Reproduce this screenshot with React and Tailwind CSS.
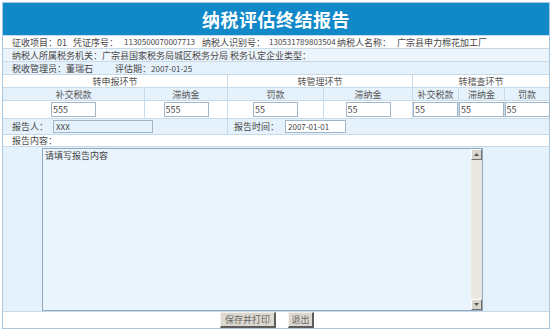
const cols = "grid grid-cols-[141px_83px_96px_89px_46px_46px_45px]";

function Cell({ children, className = "" }) {
  return (
    <div className={`flex items-center justify-center border-l border-[#c6dae9] first:border-l-0 ${className}`}>
      {children}
    </div>
  );
}

function SmallInput({ value, className = "" }) {
  return (
    <input
      readOnly
      value={value}
      className={`h-[15px] w-[45px] border border-[#a3b6c8] bg-white px-[1px] text-[9px] leading-none text-[#444] outline-none ${className}`}
    />
  );
}

function ScrollArrow({ up }) {
  return (
    <div className="flex h-[11px] w-[11px] items-center justify-center border-t border-l border-t-white border-l-white border-r border-b border-r-[#6f6f6f] border-b-[#6f6f6f] bg-[#d9d6ce]">
      <svg width="5" height="3" viewBox="0 0 5 3">
        <path d={up ? "M0 3 L2.5 0 L5 3 Z" : "M0 0 L2.5 3 L5 0 Z"} fill="#555" />
      </svg>
    </div>
  );
}

export default function App() {
  const values = ["555", "555", "55", "55", "55", "55", "55"];
  return (
    <div className="min-h-[331px] w-[553px] bg-white pl-[2px] pt-[2px] font-['Noto_Sans_CJK_SC',sans-serif] text-[9px] text-[#484848]">
      <div className="w-[548px] border border-[#aac8df]">
        <div className="flex h-[32px] items-center justify-center bg-[#1189c9]">
          <h1 className="text-[18px] font-bold tracking-[0.5px] text-white">纳税评估终结报告</h1>
        </div>

        <div className="flex h-[13px] items-center border-t border-[#c6dae9] bg-white pl-[9px] leading-none">
          <span className="w-[61px]">征收项目：01</span>
          <span className="w-[51px]">凭证序号：</span>
          <span className="w-[78px] text-[8px]">1130500070007713</span>
          <span className="w-[67px]">纳税人识别号：</span>
          <span className="w-[68px] text-[8px]">130531789803504</span>
          <span className="w-[60px]">纳税人名称：</span>
          <span>广宗县申力棉花加工厂</span>
        </div>

        <div className="flex h-[13px] items-center border-t border-[#c6dae9] bg-[#edf5fc] pl-[9px] leading-none">
          <span className="w-[90px]">纳税人所属税务机关：</span>
          <span className="w-[128px]">广宗县国家税务局城区税务分局</span>
          <span>税务认定企业类型：</span>
        </div>

        <div className="flex h-[13px] items-center border-t border-[#c6dae9] bg-[#e5f1fb] pl-[9px] leading-none">
          <span className="w-[103px]">税收管理员：董瑞石</span>
          <span>评估期：<span className="text-[8px]">2007-01-25</span></span>
        </div>

        <div className="grid h-[13px] grid-cols-[224px_185px_137px] border-t border-[#c6dae9] bg-white leading-none text-[#555]">
          <Cell>转申报环节</Cell>
          <Cell>转管理环节</Cell>
          <Cell>转稽查环节</Cell>
        </div>

        <div className={`${cols} h-[13px] border-t border-[#c6dae9] bg-[#e5f1fb] leading-none text-[#555]`}>
          <Cell>补交税款</Cell>
          <Cell>滞纳金</Cell>
          <Cell>罚款</Cell>
          <Cell>滞纳金</Cell>
          <Cell>补交税款</Cell>
          <Cell>滞纳金</Cell>
          <Cell>罚款</Cell>
        </div>

        <div className={`${cols} h-[18px] border-t border-[#c6dae9] bg-white`}>
          {values.map((v, i) => (
            <Cell key={i}>
              <SmallInput value={v} className={i > 3 ? "w-[44px]" : ""} />
            </Cell>
          ))}
        </div>

        <div className="grid h-[16px] grid-cols-[224px_322px] border-t border-[#c6dae9] bg-[#e5f1fb] leading-none">
          <div className="flex items-center pl-[9px]">
            <span className="w-[41px]">报告人：</span>
            <input
              readOnly
              value="XXX"
              className="h-[13px] w-[100px] border border-[#a3b6c8] bg-[#e5f1fb] px-[2px] text-[8px] text-[#444] outline-none"
            />
          </div>
          <div className="flex items-center border-l border-[#c6dae9] pl-[6px]">
            <span className="w-[51px]">报告时间：</span>
            <input
              readOnly
              value="2007-01-01"
              className="h-[13px] w-[61px] border border-[#a3b6c8] bg-white px-[2px] text-[8px] text-[#444] outline-none"
            />
          </div>
        </div>

        <div className="flex h-[12px] items-center border-t border-[#c6dae9] bg-white pl-[9px] leading-none">
          报告内容：
        </div>

        <div className="h-[165px] border-t border-[#c6dae9] bg-[#e5f1fb] pl-[39px] pt-[1px]">
          <div className="flex h-[163px] w-[441px] border border-[#93a9bd] bg-[#eaf4fd]">
            <textarea
              readOnly
              defaultValue="请填写报告内容"
              className="flex-1 resize-none bg-transparent px-[2px] py-[1px] text-[9px] leading-[11px] text-[#444] outline-none"
            />
            <div className="flex w-[11px] flex-col justify-between bg-[#ebe8e1]">
              <ScrollArrow up />
              <ScrollArrow />
            </div>
          </div>
        </div>

        <div className="flex h-[17px] items-start justify-center gap-[12px] border-t border-[#c6dae9] bg-white pr-[18px]">
          <button className="h-[16px] w-[56px] border-t border-l border-t-[#f2f0ea] border-l-[#f2f0ea] border-r-2 border-b-2 border-r-[#5d5d5d] border-b-[#5d5d5d] bg-[#dcd8cf] text-[9px] leading-none text-[#666]">
            保存并打印
          </button>
          <button className="h-[16px] w-[26px] border-t border-l border-t-[#f2f0ea] border-l-[#f2f0ea] border-r-2 border-b-2 border-r-[#5d5d5d] border-b-[#5d5d5d] bg-[#dcd8cf] text-[9px] leading-none text-[#666]">
            退出
          </button>
        </div>
      </div>
    </div>
  );
}
